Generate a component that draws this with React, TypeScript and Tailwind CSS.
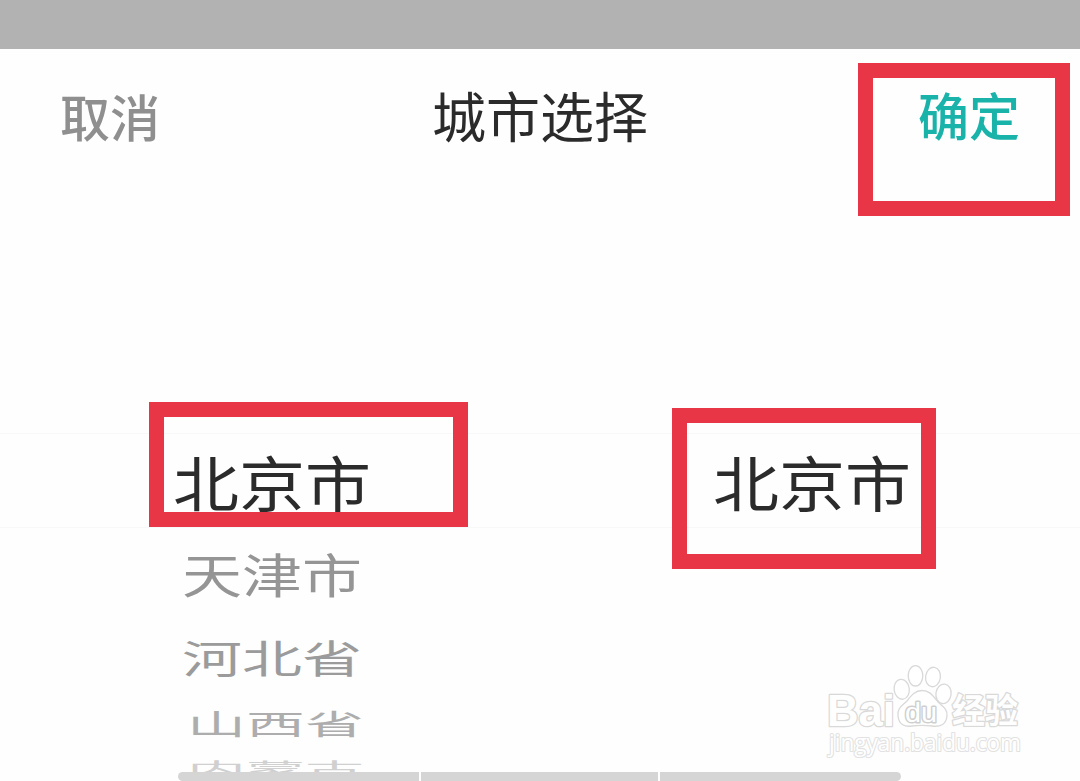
const PROVINCES = [
  {
    name: "天津市",
    row: "h-[90px] pl-[182px]",
    text: "text-[60px] scale-y-[0.77] text-[#959595]",
  },
  {
    name: "河北省",
    row: "h-[75px] pl-[182px]",
    text: "text-[60px] scale-y-[0.64] text-[#9b9b9b]",
  },
  {
    name: "山西省",
    row: "h-[59px] pl-[187px]",
    text: "text-[59px] scale-y-[0.49] text-[#adadad]",
  },
  {
    name: "内蒙古",
    row: "h-[33px] pl-[187px]",
    text: "text-[59px] scale-y-[0.31] text-[#d0d0d0]",
  },
];

function Highlight({ className }: { className: string }) {
  return (
    <div
      className={`pointer-events-none absolute border-[15.5px] border-[#e93647] ${className}`}
      aria-hidden="true"
    />
  );
}

function Watermark() {
  return (
    <svg
      className="absolute left-[820px] top-[660px] h-[105px] w-[210px]"
      viewBox="820 660 210 105"
      fill="#fff"
      stroke="#d9d9d9"
      strokeWidth="1.3"
      strokeLinejoin="round"
      aria-hidden="true"
    >
      {/* Wordmark */}
      <text
        x="827"
        y="725.5"
        fontSize="45"
        fontWeight="700"
        fontFamily="'Liberation Sans', sans-serif"
        textLength="68"
        lengthAdjust="spacingAndGlyphs"
        strokeWidth="2.6"
        paintOrder="stroke"
      >
        Bai
      </text>
      {/* Paw */}
      <ellipse cx="901.7" cy="689.3" rx="7.6" ry="10" transform="rotate(-8 901.7 689.3)" />
      <ellipse cx="915.5" cy="675.8" rx="7.3" ry="10.2" />
      <ellipse cx="933" cy="677" rx="7.4" ry="9.8" transform="rotate(8 933 677)" />
      <ellipse cx="943.5" cy="693.8" rx="7.6" ry="9.8" transform="rotate(8 943.5 693.8)" />
      <path d="M922 690.5 C915 690.5 911 696 907 701 C902 706 897 708 898 716 C899 725 905 727 912 726 C919 725 925 725 932 726 C940 727 946 725 947 716 C948 709 942 706 938 702 C933 696 930 690.5 922 690.5 Z" />
      <text
        x="905"
        y="721.5"
        fontSize="28"
        fontFamily="'Liberation Sans', sans-serif"
        textLength="32"
        lengthAdjust="spacingAndGlyphs"
        stroke="#cfcfcf"
        strokeWidth="3"
        paintOrder="stroke"
      >
        du
      </text>
      <text
        x="952"
        y="723"
        fontSize="34"
        fontWeight="700"
        fontFamily="'Noto Sans CJK SC', sans-serif"
        textLength="66"
        lengthAdjust="spacingAndGlyphs"
        strokeWidth="2.6"
        paintOrder="stroke"
      >
        经验
      </text>
      <text
        x="829"
        y="751"
        fontSize="23"
        fontFamily="'Open Sans', sans-serif"
        textLength="192"
        lengthAdjust="spacingAndGlyphs"
        strokeWidth="2.2"
        stroke="#e2e2e2"
        paintOrder="stroke"
      >
        jingyan.baidu.com
      </text>
    </svg>
  );
}

export default function App() {
  return (
    <div className="relative flex h-[781px] w-[1080px] flex-col overflow-hidden bg-[#fefefe] font-['Noto_Sans_CJK_SC',sans-serif] leading-none">
      {/* Dimmed page behind the sheet */}
      <div className="h-[49px] shrink-0 bg-[#b2b2b2]" />

      {/* Sheet header */}
      <header className="grid h-[131px] shrink-0 grid-cols-[1fr_auto_1fr] items-center pl-[60px] pr-[60px]">
        <button className="justify-self-start text-[50px] font-medium text-[#8f8f8f]">取消</button>
        <h1 className="text-[54px] font-normal text-[#2b2b2b]">城市选择</h1>
        <button className="justify-self-end text-[51px] font-medium text-[#1ab3aa]">确定</button>
      </header>

      {/* Wheel picker */}
      <main className="flex flex-1 flex-col pt-[253px]">
        <div className="grid h-[95px] shrink-0 grid-cols-2 items-center border-y border-[#f8f8f8] pb-0.5 text-[66px] text-[#2b2b2b]">
          <span className="origin-center scale-y-[0.92] pl-[173px]">北京市</span>
          <span className="origin-center scale-y-[0.92] pl-[173px]">北京市</span>
        </div>
        {PROVINCES.map((p) => (
          <div key={p.name} className={`flex shrink-0 items-center ${p.row}`}>
            <span className={`origin-center ${p.text}`}>{p.name}</span>
          </div>
        ))}
      </main>

      {/* Bottom bar */}
      <div className="absolute left-[178px] top-[772px] flex h-[9px] w-[723px] gap-[2px] overflow-hidden rounded-full">
        <span className="w-[241px] bg-[#d5d5d5]" />
        <span className="w-[237px] bg-[#d5d5d5]" />
        <span className="flex-1 bg-[#d5d5d5]" />
      </div>

      <Highlight className="left-[858px] top-[63px] h-[153px] w-[212px]" />
      <Highlight className="left-[149px] top-[402px] h-[125px] w-[319px]" />
      <Highlight className="left-[672px] top-[408px] h-[161px] w-[264px]" />

      <Watermark />
    </div>
  );
}
